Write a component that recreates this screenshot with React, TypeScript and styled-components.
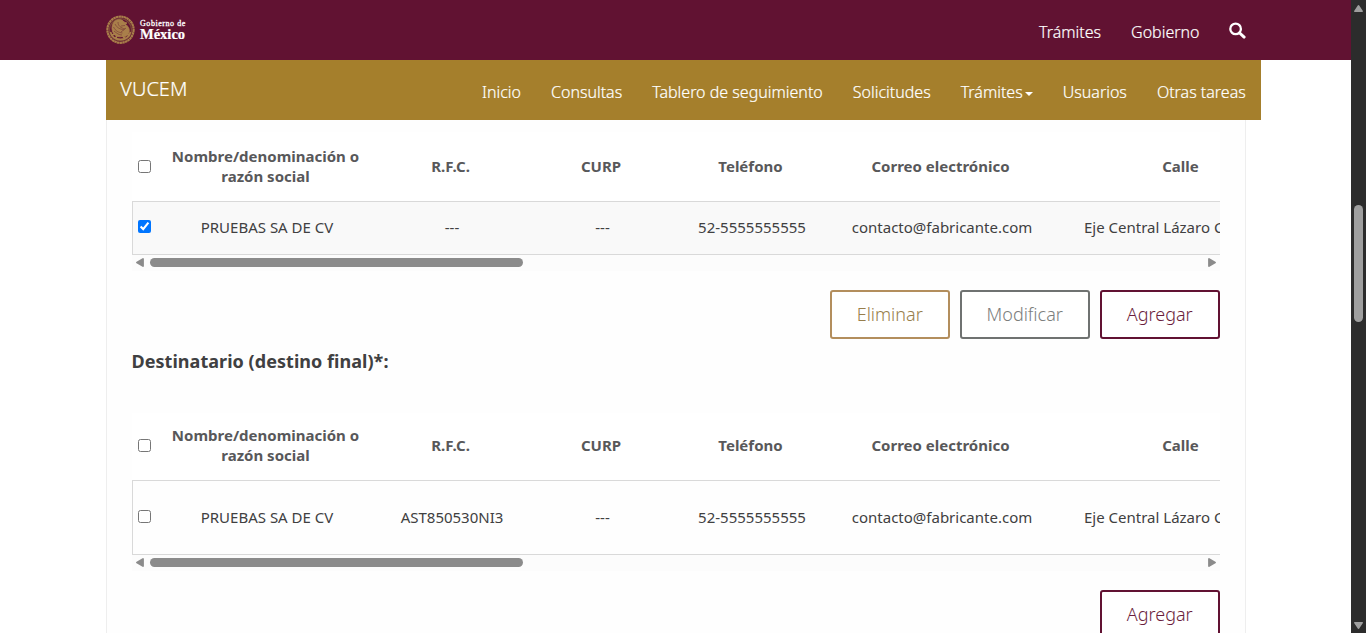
import React from "react";
import styled, { createGlobalStyle } from "styled-components";

const GlobalStyle = createGlobalStyle`
  * { box-sizing: border-box; }
  html, body { margin: 0; padding: 0; overflow: hidden; }
  body { font-family: "Noto Sans", "Open Sans", sans-serif; color: #404041; background: #fff; }
`;

const Viewport = styled.div`
  display: flex;
  width: 1366px;
  height: 633px;
  overflow: hidden;
`;

const Page = styled.div`
  display: flex;
  flex-direction: column;
  width: 1351px;
  height: 633px;
  overflow: hidden;
`;

const TopBar = styled.header`
  flex: none;
  display: flex;
  justify-content: space-between;
  height: 60px;
  padding: 0 105px 0 106px;
  background: #611232;
  color: #fff;
`;

const Brand = styled.div`
  display: flex;
  align-items: center;
  gap: 5px;
  height: 59px;
`;

const BrandText = styled.div`
  display: flex;
  flex-direction: column;
  color: #fff;
  font-family: "Liberation Serif", serif;
`;

const BrandSmall = styled.span`
  font-size: 8px;
  line-height: 8px;
  letter-spacing: 0.55px;
  font-weight: 400;
  -webkit-text-stroke: 0.3px #fff;
`;

const BrandLarge = styled.span`
  font-size: 14.5px;
  line-height: 12px;
  font-weight: 700;
  -webkit-text-stroke: 0.2px #fff;
`;

const TopLinks = styled.nav`
  display: flex;
  gap: 30px;
  padding-top: 20px;
  font-size: 16px;
  line-height: 24px;
  font-weight: 300;
  -webkit-text-stroke: 0.2px #fff;
`;

const SearchIcon = styled.svg`
  display: block;
  margin: 2px 0 0 -0.5px;
`;

const SubBar = styled.nav`
  flex: none;
  display: flex;
  justify-content: space-between;
  width: 1155px;
  height: 60px;
  margin-left: 106px;
  padding: 0 15.25px 0 14.3px;
  background: #a57f2c;
  color: #fff;
  font-weight: 300;
  -webkit-text-stroke: 0.2px #fff;
`;

const SiteName = styled.div`
  padding-top: 14px;
  font-size: 20px;
  line-height: 30px;
`;

const Menu = styled.div`
  display: flex;
  align-items: flex-start;
  gap: 30px;
  padding-top: 20px;
  font-size: 16px;
  line-height: 24px;
`;

const MenuItem = styled.span`
  display: flex;
  align-items: center;
  white-space: nowrap;
`;

const Caret = styled.i`
  margin: 4px 0 0 2px;
  border: 4px solid transparent;
  border-top-color: #fff;
  border-bottom: 0;
`;

const Panel = styled.main`
  flex: 1;
  width: 1140px;
  margin-left: 106px;
  padding: 0 25px;
  border: 1px solid #eee;
  border-width: 0 1px;
  background: #fefefe;
`;

const TableFrame = styled.section`
  width: 1088px;
  overflow: hidden;
`;

const columns = "25px 218px 152px 149px 150px 230px 250px";

const HeaderRow = styled.div<{ $height: number; $lift: number }>`
  display: grid;
  grid-template-columns: ${columns};
  align-items: center;
  width: 1174px;
  height: ${(p) => p.$height}px;
  padding-bottom: ${(p) => p.$lift}px;
  background: #fff;
  color: #58585a;
  font-size: 15px;
  line-height: 20px;
  font-weight: 700;
  text-align: center;
`;

const HeaderCell = styled.div`
  padding: 0 11px 2px 10px;
`;

const DataRow = styled.div<{ $height: number; $selected?: boolean }>`
  display: grid;
  grid-template-columns: ${columns};
  align-items: center;
  width: 1176px;
  height: ${(p) => p.$height}px;
  border: 1px solid #d9d9d9;
  background: ${(p) => (p.$selected ? "#f9f9f9" : "#fefefe")};
  font-size: 15px;
  line-height: 20px;
  text-align: center;
`;

const DataCell = styled.div<{ $start?: boolean }>`
  white-space: nowrap;
  text-align: ${(p) => (p.$start ? "left" : "center")};
  padding: 0 0 2px ${(p) => (p.$start ? 27 : 0)}px;
`;

const Check = styled.input<{ $inset: number; $lift?: number }>`
  display: block;
  width: 13px;
  height: 13px;
  margin: 0 0 ${(p) => p.$lift ?? 0}px ${(p) => p.$inset}px;
`;

const HScroll = styled.div`
  display: flex;
  align-items: center;
  height: 16px;
  padding: 0 4px 1px;
  background: #fcfcfc;
`;

const HThumb = styled.div`
  width: 373px;
  height: 9px;
  margin: 0 auto 0 6px;
  border-radius: 5px;
  background: #8b8b8b;
`;

const Actions = styled.div`
  display: flex;
  justify-content: flex-end;
  gap: 10px;
  width: 1088px;
  margin-top: 19px;
`;

const Button = styled.button<{ $border: string; $ink: string; $width: number }>`
  width: ${(p) => p.$width}px;
  height: 49px;
  padding: 0 0.5px 2px 0;
  border: 2px solid ${(p) => p.$border};
  border-radius: 3px;
  background: #fff;
  color: ${(p) => p.$ink};
  font-family: inherit;
  font-size: 18px;
  font-weight: 300;
`;

const SectionTitle = styled.h2`
  margin: 9px 0 0 -0.5px;
  height: 65px;
  font-size: 18px;
  line-height: 26px;
  font-weight: 700;
  letter-spacing: 0.04px;
`;

const VScroll = styled.aside`
  display: flex;
  flex-direction: column;
  align-items: center;
  width: 15px;
  height: 633px;
  padding: 5px 0 4px;
  background: #2c2c2c;
`;

const VThumb = styled.div`
  width: 9px;
  height: 117px;
  margin: 193px 0 auto;
  border-radius: 5px;
  background: #9f9f9f;
`;

const ArrowSvg = styled.svg`
  display: block;
  flex: none;
`;

function Arrow({ dir, color }: { dir: "up" | "down" | "left" | "right"; color: string }) {
  const vertical = dir === "up" || dir === "down";
  const d = {
    up: "M4.5 1 8 6.2H1Z",
    down: "M4.5 6 8 .8H1Z",
    left: "M1 4.5 7 1V8Z",
    right: "M7 4.5 1 1V8Z",
  }[dir];
  return (
    <ArrowSvg width={vertical ? 9 : 8} height={vertical ? 7 : 9}>
      <path d={d} fill={color} stroke={color} strokeWidth="1.8" strokeLinejoin="round" />
    </ArrowSvg>
  );
}

function Emblem() {
  return (
    <svg width="29" height="30" viewBox="0 0 29 30" fill="none" stroke="#a97f4a">
      <circle cx="14.5" cy="14.7" r="13.1" strokeWidth="2.2" strokeDasharray="2.4 .3" />
      <circle cx="14.5" cy="14.7" r="11" stroke="#7b4638" strokeWidth="1.3" />
      <path d="M9 6c3-2 7-2 9 1l3 1-2 1.500c3 1 5 4 4 8-1 3-4 5-7 4-4 1-8-1-9-4-2-4-1-9 2-11.500Z" fill="#a97f4a" strokeWidth=".8" />
      <path d="M9 9c2 4 5 5 9 6M7.500 12c2 4 5 5.500 9 6M8 16c3 2.500 5 4 8 4M12 7c0 4 3 6 7 7M19 10.500l-4 .5M20 13l-5 4" stroke="#7b3d38" strokeWidth=".7" />
      <path d="M4.500 17c1 4.500 5 7.500 10 7.500s9-3 10-7.500M6 20l3-1M9 24l2-3M19 24l-2-3M23 20l-3-1" strokeWidth="1.800" />
    </svg>
  );
}

const headings = ["Nombre/denominación o razón social", "R.F.C.", "CURP", "Teléfono", "Correo electrónico", "Calle"];

interface TableProps {
  headerHeight: number;
  headerLift: number;
  rowHeight: number;
  selected?: boolean;
  rfc: string;
}

function ContactTable({ headerHeight, headerLift, rowHeight, selected, rfc }: TableProps) {
  const values = ["PRUEBAS SA DE CV", rfc, "---", "52-5555555555", "contacto@fabricante.com", "Eje Central Lázaro Cárdenas"];
  return (
    <TableFrame>
      <HeaderRow $height={headerHeight} $lift={headerLift}>
        <Check type="checkbox" $inset={6} />
        {headings.map((h) => <HeaderCell key={h}>{h}</HeaderCell>)}
      </HeaderRow>
      <DataRow $height={rowHeight} $selected={selected}>
        <Check type="checkbox" $inset={5} $lift={selected ? 4 : 2} defaultChecked={selected} />
        {values.map((v, i) => <DataCell key={i} $start={i === 5}>{v}</DataCell>)}
      </DataRow>
      <HScroll>
        <Arrow dir="left" color="#8b8b8b" />
        <HThumb />
        <Arrow dir="right" color="#8b8b8b" />
      </HScroll>
    </TableFrame>
  );
}

const FirstTable = styled.div`
  padding-top: 12px;
`;

export default function App() {
  return (
    <Viewport>
      <GlobalStyle />
      <Page>
        <TopBar>
          <Brand>
            <Emblem />
            <BrandText>
              <BrandSmall>Gobierno de</BrandSmall>
              <BrandLarge>México</BrandLarge>
            </BrandText>
          </Brand>
          <TopLinks>
            <span>Trámites</span>
            <span>Gobierno</span>
            <SearchIcon width="17" height="17" viewBox="0 0 17 17" fill="none" stroke="#fff">
              <circle cx="6.600" cy="6.900" r="5.300" strokeWidth="2.300" />
              <path d="m10.700 11 4.400 4.100" strokeWidth="3" strokeLinecap="round" />
            </SearchIcon>
          </TopLinks>
        </TopBar>
        <SubBar>
          <SiteName>VUCEM</SiteName>
          <Menu>
            <MenuItem>Inicio</MenuItem>
            <MenuItem>Consultas</MenuItem>
            <MenuItem>Tablero de seguimiento</MenuItem>
            <MenuItem>Solicitudes</MenuItem>
            <MenuItem>Trámites<Caret /></MenuItem>
            <MenuItem>Usuarios</MenuItem>
            <MenuItem>Otras tareas</MenuItem>
          </Menu>
        </SubBar>
        <Panel>
          <FirstTable>
            <ContactTable headerHeight={69} headerLift={0} rowHeight={54} selected rfc="---" />
          </FirstTable>
          <Actions>
            <Button $width={120} $border="#b38e5d" $ink="#977e4c">Eliminar</Button>
            <Button $width={130} $border="#6f7271" $ink="#7c7e7d">Modificar</Button>
            <Button $width={120} $border="#611232" $ink="#6b1e3d">Agregar</Button>
          </Actions>
          <SectionTitle>Destinatario (destino final)*:</SectionTitle>
          <ContactTable headerHeight={67} headerLift={2} rowHeight={75} rfc="AST850530NI3" />
          <Actions>
            <Button $width={120} $border="#611232" $ink="#6b1e3d">Agregar</Button>
          </Actions>
        </Panel>
      </Page>
      <VScroll>
        <Arrow dir="up" color="#9f9f9f" />
        <VThumb />
        <Arrow dir="down" color="#9f9f9f" />
      </VScroll>
    </Viewport>
  );
}
